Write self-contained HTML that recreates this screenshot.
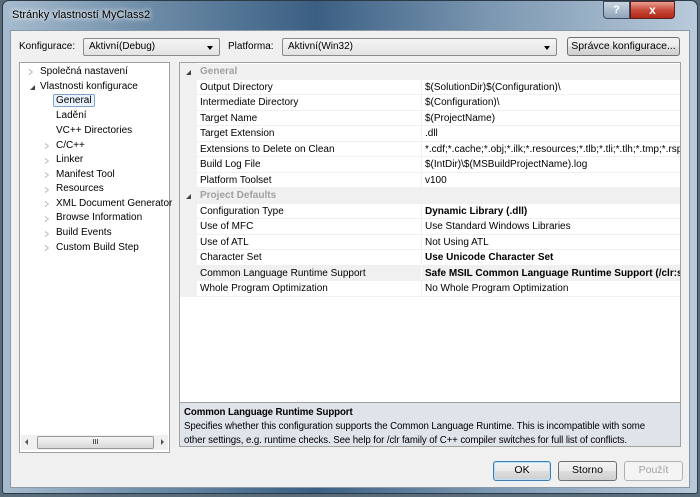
<!DOCTYPE html>
<html><head><meta charset="utf-8"><style>
*{box-sizing:border-box;margin:0;padding:0}
body{width:700px;height:497px;overflow:hidden;background:#5a6b7a;font-family:"Liberation Sans",sans-serif;font-size:10px;color:#000;position:relative}
.abs{position:absolute}
#frame{left:2px;top:0;width:696px;height:494px;border:1px solid #2c3a48;border-radius:7px 7px 3px 3px;background:linear-gradient(90deg,#a7bccf 0%,#6f8ea9 20%,#3b5f83 45%,#7b97b1 70%,#b9cadb 100%)}
#title{left:12px;top:9px;font-size:11px;color:#000;text-shadow:0 0 6px #fff,0 0 6px #fff}
#client{left:10px;top:30px;width:680px;height:458px;background:#f0f0f0;border:1px solid #8a99a8}
.btn{position:absolute;border:1px solid #707070;border-radius:3px;background:linear-gradient(#f2f2f2 0%,#ebebeb 50%,#dddddd 51%,#cfcfcf 100%);text-align:center;font-size:10.5px;line-height:17px}
.combo{position:absolute;border:1px solid #8a8a8a;border-radius:2px;background:linear-gradient(#f6f6f6,#e2e2e2);padding-left:5px;line-height:16px}
.combo:after{content:"";position:absolute;right:6px;top:7px;border:3.5px solid transparent;border-top:4px solid #000}
#tree{left:19px;top:62px;width:151px;height:391px;background:#fff;border:1px solid #a0a0a0}
.ti{position:absolute;white-space:nowrap}
.tri{position:absolute;width:0;height:0;border:3.5px solid transparent;border-left:4px solid #a0a0a0}
.tri:after{content:"";position:absolute;left:-4px;top:-2.5px;border:2.5px solid transparent;border-left:3px solid #fff}
#grid{left:179px;top:62px;width:502px;height:340px;background:#fff;border:1px solid #a0a0a0;border-bottom:none;overflow:hidden}
.row{position:absolute;left:0;width:501px;height:15.5px;border-bottom:1px solid #f0f0f0}
.row .n{position:absolute;left:20px;top:2px;white-space:nowrap}
.row .v{position:absolute;left:241px;top:0;padding-top:2px;white-space:nowrap;border-left:1px solid #f0f0f0;padding-left:3px;height:14px}
.gut{position:absolute;left:0;top:0;width:17px;height:234px;background:#f0f0f0}
.hdr{background:#f0f0f0}
.hdr .n{color:#a0a0a0;font-weight:bold}
.b{font-weight:bold}
#desc{left:179px;top:402px;width:502px;height:45px;background:#dfe3ea;border:1px solid #a0a0a0;padding:3px 4px;line-height:14px;font-size:9.7px;letter-spacing:-0.1px}
</style></head><body>
<div id="frame" class="abs"></div>
<div id="title" class="abs">Stránky vlastností MyClass2</div>
<div class="abs" style="left:603px;top:1px;width:27px;height:18px;border:1px solid #3a4a5a;border-radius:0 0 0 4px;background:linear-gradient(#c8d4e0,#8fa3b8);color:#fff;text-align:center;font-weight:bold;line-height:16px;font-size:11px">?</div>
<div class="abs" style="left:630px;top:1px;width:45px;height:18px;border:1px solid #5a2020;border-radius:0 0 4px 0;background:linear-gradient(#e8a090,#c74a3a 50%,#b02818);color:#fff;text-align:center;font-weight:bold;line-height:16px;font-size:12px">x</div>
<div id="client" class="abs"></div>
<div class="abs" style="left:19px;top:41px">Konfigurace:</div>
<div class="combo" style="left:83px;top:38px;width:137px;height:18px">Aktivní(Debug)</div>
<div class="abs" style="left:228px;top:41px">Platforma:</div>
<div class="combo" style="left:282px;top:38px;width:275px;height:18px">Aktivní(Win32)</div>
<div class="btn" style="left:567px;top:37px;width:113px;height:19px">Správce konfigurace...</div>

<div id="tree" class="abs">
<div class="tri" style="left:9px;top:6px"></div><div class="ti" style="left:20px;top:3px">Společná nastavení</div>
<div class="abs" style="left:10px;top:22px;width:0;height:0;border-left:5px solid transparent;border-bottom:5px solid #444"></div><div class="ti" style="left:20px;top:18px">Vlastnosti konfigurace</div>
<div class="ti" style="left:33px;top:31px;border:1px solid #7da2ce;background:#eaf2fb;padding:0 2px;border-radius:2px">General</div>
<div class="ti" style="left:36px;top:47px">Ladění</div>
<div class="ti" style="left:36px;top:62px">VC++ Directories</div>
<div class="tri" style="left:25px;top:80px"></div><div class="ti" style="left:36px;top:77px">C/C++</div>
<div class="tri" style="left:25px;top:95px"></div><div class="ti" style="left:36px;top:91px">Linker</div>
<div class="tri" style="left:25px;top:109px"></div><div class="ti" style="left:36px;top:106px">Manifest Tool</div>
<div class="tri" style="left:25px;top:124px"></div><div class="ti" style="left:36px;top:120px">Resources</div>
<div class="tri" style="left:25px;top:138px"></div><div class="ti" style="left:36px;top:135px">XML Document Generator</div>
<div class="tri" style="left:25px;top:153px"></div><div class="ti" style="left:36px;top:149px">Browse Information</div>
<div class="tri" style="left:25px;top:168px"></div><div class="ti" style="left:36px;top:164px">Build Events</div>
<div class="tri" style="left:25px;top:182px"></div><div class="ti" style="left:36px;top:179px">Custom Build Step</div>
<div class="abs" style="left:1px;top:372px;width:147px;height:15px;background:#f0f0f0">
<div class="abs" style="left:4px;top:4px;border:3px solid transparent;border-right:3px solid #555;border-left:none"></div>
<div class="abs" style="left:16px;top:1px;width:117px;height:13px;border:1px solid #999;border-radius:2px;background:linear-gradient(#f4f4f4,#d8d8d8);text-align:center;font-size:7px;line-height:11px">III</div>
<div class="abs" style="left:140px;top:4px;border:3px solid transparent;border-left:3px solid #555;border-right:none"></div>
</div>
</div>

<div id="grid" class="abs">
<div class="gut"></div>
<div class="row hdr" style="top:1px"><div class="abs" style="left:6px;top:6px;border-left:5px solid transparent;border-bottom:5px solid #444"></div><div class="n">General</div></div>
<div class="row" style="top:16.5px"><div class="n">Output Directory</div><div class="v">$(SolutionDir)$(Configuration)\</div></div>
<div class="row" style="top:32px"><div class="n">Intermediate Directory</div><div class="v">$(Configuration)\</div></div>
<div class="row" style="top:47.5px"><div class="n">Target Name</div><div class="v">$(ProjectName)</div></div>
<div class="row" style="top:63px"><div class="n">Target Extension</div><div class="v">.dll</div></div>
<div class="row" style="top:78.5px"><div class="n">Extensions to Delete on Clean</div><div class="v">*.cdf;*.cache;*.obj;*.ilk;*.resources;*.tlb;*.tli;*.tlh;*.tmp;*.rsp;*</div></div>
<div class="row" style="top:94px"><div class="n">Build Log File</div><div class="v">$(IntDir)\$(MSBuildProjectName).log</div></div>
<div class="row" style="top:109.5px"><div class="n">Platform Toolset</div><div class="v">v100</div></div>
<div class="row hdr" style="top:125px"><div class="abs" style="left:6px;top:6px;border-left:5px solid transparent;border-bottom:5px solid #444"></div><div class="n">Project Defaults</div></div>
<div class="row" style="top:140.5px"><div class="n">Configuration Type</div><div class="v b">Dynamic Library (.dll)</div></div>
<div class="row" style="top:156px"><div class="n">Use of MFC</div><div class="v">Use Standard Windows Libraries</div></div>
<div class="row" style="top:171.5px"><div class="n">Use of ATL</div><div class="v">Not Using ATL</div></div>
<div class="row" style="top:187px"><div class="n">Character Set</div><div class="v b">Use Unicode Character Set</div></div>
<div class="row" style="top:202.5px;background:#f0f0f0"><div class="n">Common Language Runtime Support</div><div class="v b" style="border-left-color:#fff">Safe MSIL Common Language Runtime Support (/clr:safe</div></div>
<div class="row" style="top:218px"><div class="n">Whole Program Optimization</div><div class="v">No Whole Program Optimization</div></div>
</div>

<div id="desc" class="abs"><b>Common Language Runtime Support</b><br><span style="white-space:nowrap">Specifies whether this configuration supports the Common Language Runtime. This is incompatible with some</span><br><span style="white-space:nowrap">other settings, e.g. runtime checks. See help for /clr family of C++ compiler switches for full list of conflicts.</span></div>

<div class="btn" style="left:493px;top:461px;width:58px;height:20px;border-color:#3c7fb1;box-shadow:inset 0 0 0 1px #b8e0f8">OK</div>
<div class="btn" style="left:558px;top:461px;width:59px;height:20px">Storno</div>
<div class="btn" style="left:624px;top:461px;width:59px;height:20px;background:#f4f4f4;border-color:#adb2b5;color:#a0a0a0">Použít</div>
</body></html>
